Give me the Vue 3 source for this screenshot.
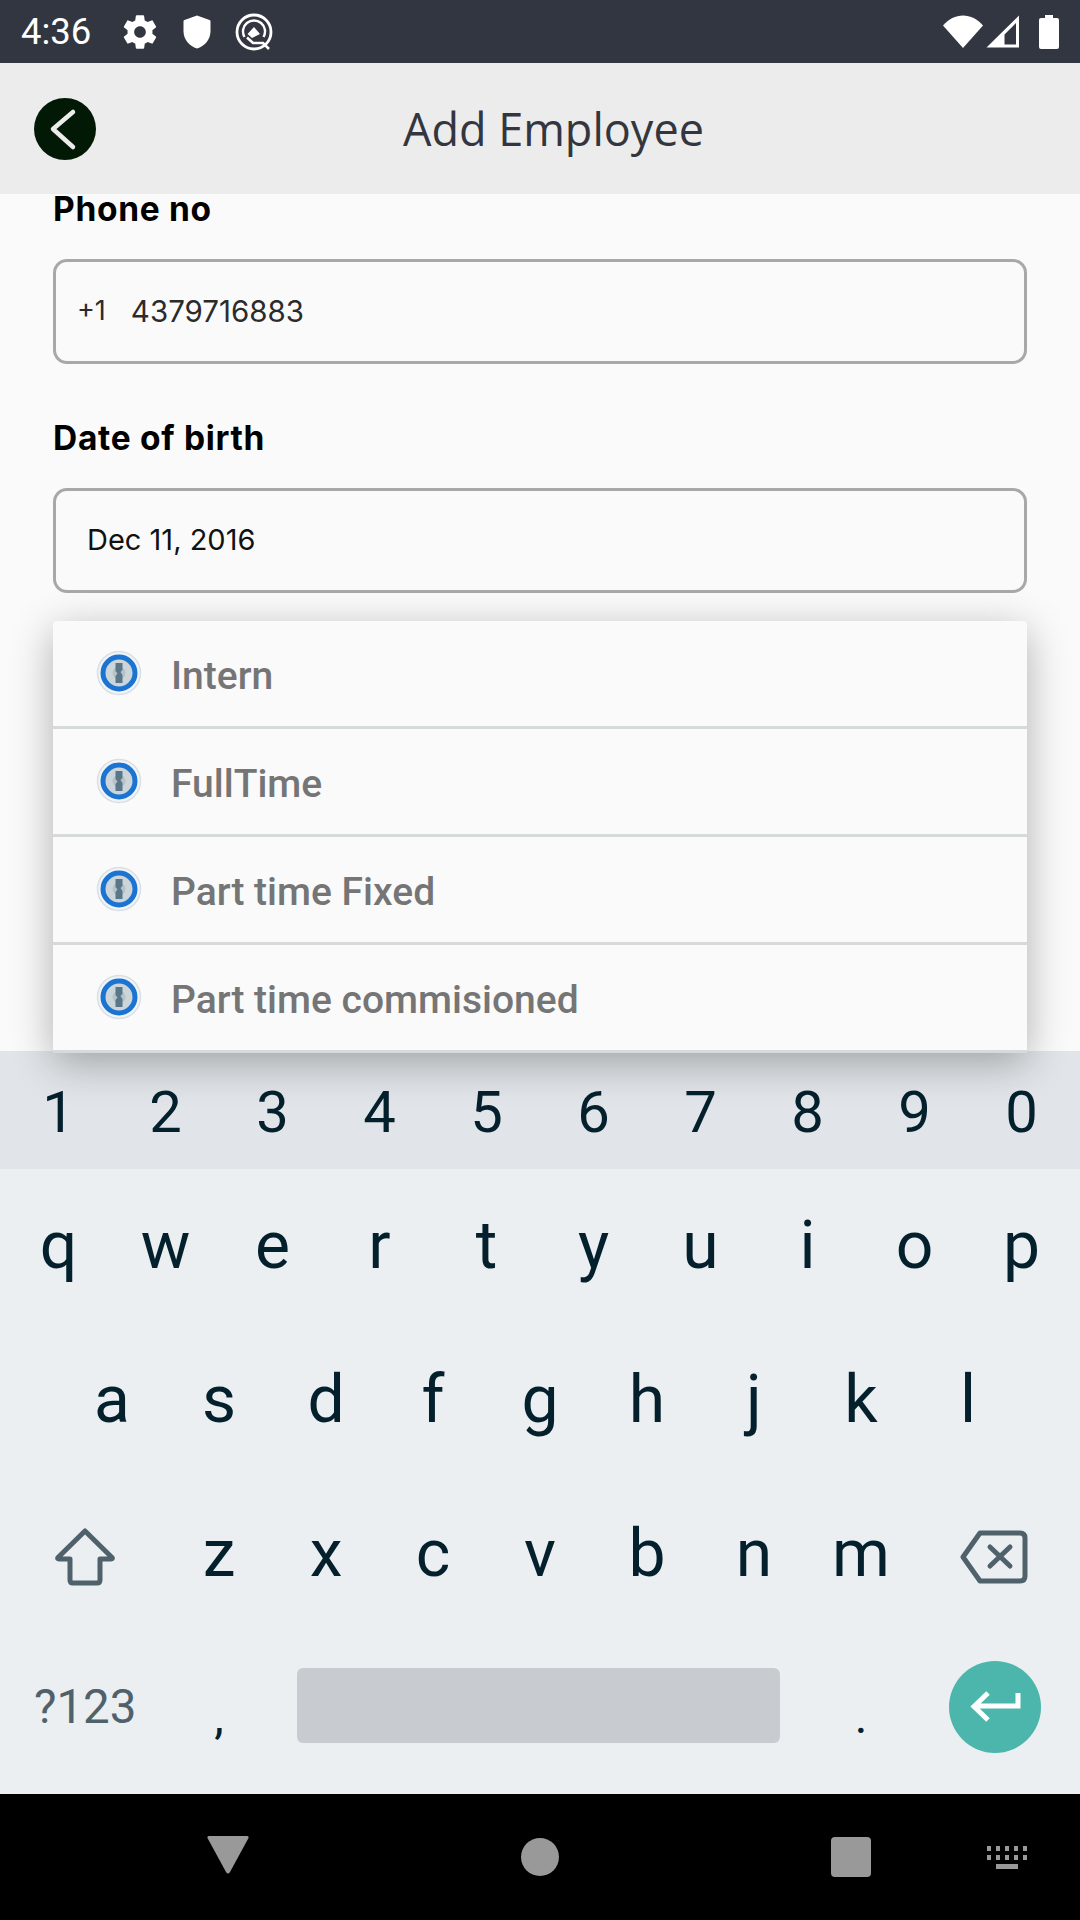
<script setup>
const options = ['Intern', 'FullTime', 'Part time Fixed', 'Part time commisioned']
const digits = '1234567890'.split('')
const row1 = 'qwertyuiop'.split('')
const row2 = 'asdfghjkl'.split('')
const row3 = 'zxcvbnm'.split('')
</script>

<template>
  <div class="screen">
    <div class="status">
      <span class="time">4:36</span>
      <svg class="st-gear" width="40" height="40" viewBox="0 0 24 24"><path fill="#fff" d="M19.4 13c.04-.33.1-.66.1-1s-.06-.67-.1-1l2.1-1.65c.2-.15.25-.42.12-.64l-2-3.46c-.12-.22-.39-.3-.61-.22l-2.49 1c-.52-.4-1.08-.73-1.69-.98l-.38-2.65A.49.49 0 0 0 14 2h-4c-.25 0-.46.18-.49.42l-.38 2.65c-.61.25-1.17.59-1.69.98l-2.49-1c-.23-.09-.49 0-.61.22l-2 3.46c-.13.22-.07.49.12.64L4.57 11c-.04.33-.07.66-.07 1s.03.67.07 1l-2.11 1.65c-.19.15-.25.42-.12.64l2 3.46c.12.22.39.3.61.22l2.49-1c.52.4 1.08.73 1.69.98l.38 2.65c.03.24.24.42.49.42h4c.25 0 .46-.18.49-.42l.38-2.65c.61-.25 1.17-.59 1.69-.98l2.49 1c.23.09.49 0 .61-.22l2-3.46c.12-.22.07-.49-.12-.64L19.4 13zM12 15.5c-1.93 0-3.5-1.57-3.5-3.5s1.57-3.5 3.5-3.5 3.5 1.57 3.5 3.5-1.57 3.5-3.5 3.5z"/></svg>
      <svg class="st-shield" width="28" height="34" viewBox="0 0 28 34"><path fill="#fff" d="M14 0.5 L26.5 5 Q27.5 5.4 27.5 6.5 V16 C27.5 25 21.5 31 14 33.5 C6.5 31 0.5 25 0.5 16 V6.5 Q0.5 5.4 1.5 5 Z"/></svg>
      <svg class="st-q" width="38" height="38" viewBox="0 0 38 38">
        <circle cx="19" cy="19" r="17" fill="none" stroke="#fff" stroke-width="2.800"/>
        <path d="M9.500 24 A11 11 0 1 1 28.500 24" fill="none" stroke="#fff" stroke-width="2.400"/>
        <path d="M19 14 L12.500 21 L17 25 L25 21 Z" fill="#fff"/>
        <path d="M12 24.500 L18 30 H28 L34 36" fill="none" stroke="#fff" stroke-width="2.600"/>
      </svg>
      <span class="st-space"></span>
      <svg class="st-wifi" width="40" height="33" viewBox="0 0 40 33"><path fill="#fff" d="M0 10.5 C11 -3 29 -3 40 10.5 L20 33 Z"/></svg>
      <svg class="st-signal" width="34" height="33" viewBox="0 0 34 33"><path fill="#fff" fill-rule="evenodd" d="M33 0.500 V32.500 H0.500 Z M30 8 L18.500 19.500 V29.500 H30 Z"/></svg>
      <svg class="st-batt" width="20" height="34" viewBox="0 0 20 34"><path fill="#fff" d="M6 0 H14 V3 H18 Q20 3 20 5 V32 Q20 34 18 34 H2 Q0 34 0 32 V5 Q0 3 2 3 H6 Z"/></svg>
    </div>

    <div class="header">
      <div class="back">
        <svg width="62" height="62" viewBox="0 0 62 62"><path d="M39 14 L19 31 L39 49" fill="none" stroke="#ececec" stroke-width="4.500" stroke-linecap="round" stroke-linejoin="round"/></svg>
      </div>
      <div class="title">Add Employee</div>
    </div>

    <div class="form">
      <div class="label first">Phone no</div>
      <div class="field phone"><span class="code">+1</span><span>4379716883</span></div>
      <div class="label">Date of birth</div>
      <div class="field date">Dec 11, 2016</div>

      <div class="menu">
        <div v-for="o in options" :key="o" class="menu-row">
          <svg class="pw" width="46" height="46" viewBox="0 0 46 46">
            <circle cx="23" cy="23" r="21.500" fill="#f1f4f6" stroke="#d8e0e6" stroke-width="1.500"/>
            <circle cx="23" cy="23" r="16" fill="#ccd5da" stroke="#1b74d2" stroke-width="5"/>
            <circle cx="23" cy="23" r="6.500" fill="#b7c2c9"/>
            <path d="M19.500 13 H26.500 V20 L24.500 22 L26.500 25 V33 H19.500 V26 L21.500 23.500 L19.500 21 Z" fill="#5a7689"/>
          </svg>
          <span>{{ o }}</span>
        </div>
      </div>
    </div>

    <div class="keyboard">
      <div class="num-row">
        <div v-for="k in digits" :key="k" class="key">{{ k }}</div>
      </div>
      <div class="kb-row">
        <div v-for="k in row1" :key="k" class="key">{{ k }}</div>
      </div>
      <div class="kb-row inset">
        <div v-for="k in row2" :key="k" class="key">{{ k }}</div>
      </div>
      <div class="kb-row">
        <div class="key wide">
          <svg class="kb-icon" width="60" height="58" viewBox="0 0 60 58"><path d="M30 3 L57 29.500 Q58 31 56 31 H45 V52 Q45 55 42 55 H18 Q15 55 15 52 V31 H4 Q2 31 3 29.500 Z" fill="none" stroke="#4f616b" stroke-width="5" stroke-linejoin="round"/></svg>
        </div>
        <div v-for="k in row3" :key="k" class="key">{{ k }}</div>
        <div class="key wide">
          <svg class="kb-icon del" width="68" height="54" viewBox="0 0 68 54"><path d="M20 3 H60 Q65 3 65 8 V46 Q65 51 60 51 H20 L3 27 Z" fill="none" stroke="#4f616b" stroke-width="5" stroke-linejoin="round"/><path d="M30 17 L50 36 M50 17 L30 36" stroke="#4f616b" stroke-width="5" stroke-linecap="round"/></svg>
        </div>
      </div>
      <div class="kb-row bottom">
        <div class="key wide sym">?123</div>
        <div class="key punct">,</div>
        <div class="space-key"><div class="space-bar"></div></div>
        <div class="key punct">.</div>
        <div class="key wide">
          <div class="enter">
            <svg width="52" height="32" viewBox="0 0 52 32"><path d="M49 2 V15 H5 M19 2 L5 15.500 L19 29" fill="none" stroke="#fff" stroke-width="5"/></svg>
          </div>
        </div>
      </div>
    </div>

    <div class="nav">
      <svg class="nav-back" width="42" height="38" viewBox="0 0 42 38"><path d="M2 0 H40 Q42 0 41.500 2 L23 36 Q21 39 19 36 L0.500 2 Q0 0 2 0 Z" fill="#999"/></svg>
      <div class="nav-home"></div>
      <div class="nav-recent"></div>
      <svg class="nav-kb" width="40" height="24" viewBox="0 0 40 24">
        <g fill="#999">
          <rect x="0" y="0" width="4" height="5"/><rect x="9" y="0" width="4" height="5"/><rect x="18" y="0" width="4" height="5"/><rect x="27" y="0" width="4" height="5"/><rect x="36" y="0" width="4" height="5"/>
          <rect x="0" y="9" width="4" height="5"/><rect x="9" y="9" width="4" height="5"/><rect x="18" y="9" width="4" height="5"/><rect x="27" y="9" width="4" height="5"/><rect x="36" y="9" width="4" height="5"/>
          <rect x="9" y="18" width="22" height="5"/>
        </g>
      </svg>
    </div>
  </div>
</template>

<style scoped>
.screen {
  width: 1080px;
  height: 1920px;
  display: flex;
  flex-direction: column;
  background: #fafafa;
  overflow: hidden;
  font-family: "Inter", sans-serif;
}

.status {
  height: 63px;
  flex: none;
  background: #323640;
  display: flex;
  align-items: center;
  padding: 0 21px;
  color: #fff;
}
.time {
  font: 400 36.500px "Roboto", sans-serif;
  width: 72px;
}
.st-gear { margin-left: 27px; }
.st-shield { margin-left: 23px; }
.st-q { margin-left: 24px; }
.st-space { flex: 1; }
.st-signal { margin-left: 3px; }
.st-batt { margin-left: 19px; }

.header {
  height: 131px;
  flex: none;
  background: #ececec;
  display: flex;
  align-items: center;
  padding-left: 34px;
}
.back {
  width: 62px;
  height: 62px;
  border-radius: 50%;
  background: #021a05;
}
.title {
  margin-left: 307px;
  font: 400 45px "Open Sans", sans-serif;
  color: #33363f;
}

.form {
  flex: 1;
  min-height: 0;
  padding: 0 53px;
  position: relative;
  z-index: 1;
}
.label {
  font-size: 33.500px;
  font-weight: 700;
  letter-spacing: 0.7px;
  color: #000;
  margin-top: 54px;
  line-height: 41px;
}
.label.first { margin-top: -5px; height: 70px; }
.field {
  height: 105px;
  box-sizing: border-box;
  border: 3px solid #a8a8a8;
  border-radius: 14px;
  display: flex;
  align-items: center;
  font-size: 29.500px;
  padding-bottom: 2px;
}
.label + .field { margin-top: 29px; }
.label.first + .field { margin-top: 0; }
.phone { padding-left: 21px; color: #2b2b2b; }
.code { font-size: 27px; margin-right: 25px; }
.date { padding-left: 31px; color: #111; font-size: 29px; }

.menu {
  margin-top: 28px;
  background: #fafafa;
  border-radius: 4px 4px 0 0;
  box-shadow: 0 10px 42px rgba(0, 0, 0, 0.3);
}
.menu-row {
  height: 108px;
  box-sizing: border-box;
  border-bottom: 3px solid #d6dadb;
  display: flex;
  align-items: center;
  padding-left: 43px;
  font: 500 39px "Roboto", sans-serif;
  color: #757575;
}
.menu-row span { margin-left: 29px; padding-top: 4px; }
.pw { flex: none; margin-top: -1px; }

.keyboard {
  flex: none;
  height: 743px;
  background: #ebeff2;
  display: flex;
  flex-direction: column;
  padding-bottom: 10px;
  box-sizing: border-box;
  font-family: "Roboto", sans-serif;
}
.num-row {
  height: 118px;
  flex: none;
  background: #e1e5e9;
  display: flex;
  padding: 0 5px;
}
.kb-row {
  flex: 1;
  display: flex;
  padding: 0 5px;
}
.kb-row.inset { padding: 0 58.500px; }
.key {
  width: 107px;
  flex: none;
  display: flex;
  align-items: center;
  justify-content: center;
  font-size: 66px;
  color: #04202c;
}
.num-row .key { font-size: 58px; padding-top: 4px; box-sizing: border-box; }
.key.wide { width: 160.500px; }
.kb-icon { margin-top: 8px; }
.kb-icon.del { margin-left: -2px; }
.sym { font-size: 47.500px; color: #4f616b; }
.punct { font-size: 48px; padding-top: 18px; box-sizing: border-box; }
.space-key {
  flex: 1;
  display: flex;
  align-items: center;
}
.space-bar {
  width: 100%;
  margin: -4px 28px 0 24px;
  height: 75px;
  border-radius: 6px;
  background: #c8ccd0;
}
.enter {
  width: 92px;
  height: 92px;
  border-radius: 50%;
  background: #4db6ac;
  display: flex;
  align-items: center;
  justify-content: center;
}

.nav {
  height: 126px;
  flex: none;
  background: #000;
  position: relative;
}
.nav-back { position: absolute; left: 207px; top: 42px; }
.nav-home {
  position: absolute;
  left: 521px;
  top: 44px;
  width: 38px;
  height: 38px;
  border-radius: 50%;
  background: #999;
}
.nav-recent {
  position: absolute;
  left: 831px;
  top: 43px;
  width: 40px;
  height: 40px;
  border-radius: 4px;
  background: #999;
}
.nav-kb { position: absolute; left: 987px; top: 52px; }
</style>
